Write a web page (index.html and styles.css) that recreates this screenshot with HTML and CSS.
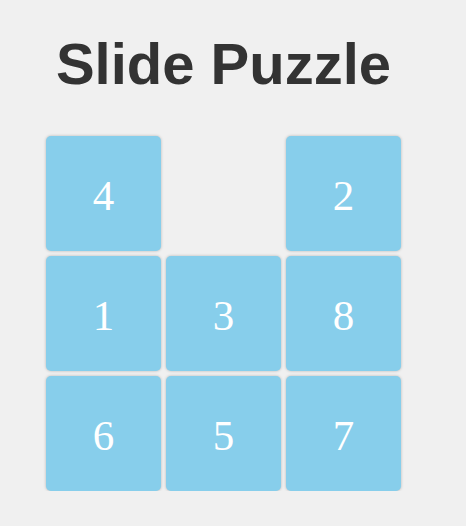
FILE: index.html
```html
<!DOCTYPE html>
<html>
<head>
<meta charset="utf-8">
<link rel="stylesheet" href="styles.css">
</head>
<body>
<div class="app">
  <h1 class="title">Slide Puzzle</h1>
  <div class="board">
    <div class="tile">4</div>
    <div class="tile empty"></div>
    <div class="tile">2</div>
    <div class="tile">1</div>
    <div class="tile">3</div>
    <div class="tile">8</div>
    <div class="tile">6</div>
    <div class="tile">5</div>
    <div class="tile">7</div>
  </div>
</div>
</body>
</html>
```
FILE: styles.css
```css
html, body {
  margin: 0;
  padding: 0;
  background: #f0f0f0;
}
.app {
  width: 355px;
  padding: 0 0 0 46px;
  display: flex;
  flex-direction: column;
  align-items: center;
}
.title {
  margin: 30px 0 0 0;
  font-family: "Liberation Sans", Arial, sans-serif;
  font-weight: bold;
  font-size: 58px;
  line-height: 68px;
  color: #333333;
  white-space: nowrap;
}
.board {
  margin-top: 38px;
  display: grid;
  grid-template-columns: repeat(3, 115px);
  grid-template-rows: repeat(3, 115px);
  gap: 5px;
}
.tile {
  background: #87ceeb;
  border-radius: 5px;
  box-shadow: 0 0 3px rgba(0, 0, 0, 0.25);
  color: #ffffff;
  font-family: "Liberation Serif", "Times New Roman", serif;
  font-size: 43px;
  padding-top: 4px;
  box-sizing: border-box;
  display: flex;
  align-items: center;
  justify-content: center;
}
.tile.empty {
  background: transparent;
  box-shadow: none;
}
```
